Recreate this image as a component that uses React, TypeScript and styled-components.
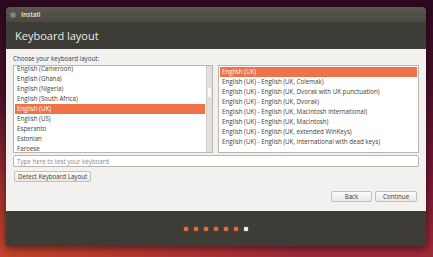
import React from 'react';
import styled, { createGlobalStyle } from 'styled-components';

// Constants
const COLORS = {
  CHROME: '#3d3c37',
  CHROME_TOP: '#59574f',
  PANEL: '#f2f1f0',
  BORDER: '#b9b6b0',
  TEXT: '#3c3c3c',
  ORANGE: '#ef7248',
  DOT: '#e8673c',
};

const FONT = '"Open Sans", "Noto Sans", "DejaVu Sans", sans-serif';
const SMALL = '6.2px';

const GlobalStyle = createGlobalStyle`
  html, body {
    margin: 0;
    width: 433px;
    height: 257px;
    overflow: hidden;
  }
  body {
    font-family: ${FONT};
    background:
      radial-gradient(ellipse 70% 60% at 0% 100%, rgba(200, 70, 40, 0.9), rgba(200, 70, 40, 0) 100%),
      linear-gradient(to bottom, #2c0a1f 0%, #4a1029 35%, #7d1a35 75%, #a02a3a 100%);
  }
`;

const Page = styled.div`
  padding: 7px 7px 0 6px;
`;

const Window = styled.div`
  width: 420px;
  height: 239px;
  display: flex;
  flex-direction: column;
  border-radius: 4px 4px 0 0;
  overflow: hidden;
  box-shadow: 0 2px 8px rgba(0, 0, 0, 0.55);
`;

const TitleBar = styled.div`
  height: 15px;
  display: flex;
  align-items: center;
  gap: 5px;
  padding-left: 4px;
  background: linear-gradient(to bottom, ${COLORS.CHROME_TOP}, #4a4943);
`;

const CloseDot = styled.span`
  width: 6px;
  height: 6px;
  border-radius: 50%;
  background: #8a8883;
  box-shadow: inset 0 0 0 1px #6e6c67;
`;

const WindowTitle = styled.span`
  font-size: ${SMALL};
  font-weight: 700;
  color: #dcd8cf;
`;

const Header = styled.div`
  height: 27px;
  display: flex;
  align-items: center;
  padding-left: 9px;
  background: ${COLORS.CHROME};
  color: #eeebe5;
  font-size: 11px;
`;

const Content = styled.div`
  flex: 1;
  display: flex;
  flex-direction: column;
  background: ${COLORS.PANEL};
  padding: 5px 7px 9px 7px;
`;

const Label = styled.div`
  font-size: ${SMALL};
  line-height: 10px;
  color: ${COLORS.TEXT};
  margin-bottom: 1px;
`;

const Lists = styled.div`
  display: grid;
  grid-template-columns: 200px 201px;
  gap: 5px;
  height: 88px;
`;

const ListBox = styled.div`
  display: flex;
  border: 1px solid ${COLORS.BORDER};
  background: #fff;
  overflow: hidden;
`;

const Rows = styled.div<{ $offset: number }>`
  flex: 1;
  margin-top: ${p => p.$offset}px;
  padding: 0 1px;
`;

const Row = styled.div<{ $selected: boolean }>`
  height: 10px;
  line-height: 10px;
  padding-left: 2px;
  font-size: ${SMALL};
  white-space: nowrap;
  color: ${p => (p.$selected ? '#fff' : COLORS.TEXT)};
  background: ${p => (p.$selected ? COLORS.ORANGE : 'transparent')};
`;

const ScrollTrack = styled.div`
  width: 5px;
  background: #e2e0dc;
  border-left: 1px solid #cfccc6;
  padding-top: 22px;
`;

const ScrollThumb = styled.div`
  height: 9px;
  margin: 0 1px;
  background: #fbfbfa;
  border-radius: 1px;
`;

const TestInput = styled.input`
  margin-top: 2px;
  height: 12px;
  box-sizing: border-box;
  border: 1px solid ${COLORS.BORDER};
  border-radius: 2px;
  padding: 0 3px;
  font-family: ${FONT};
  font-size: ${SMALL};
  background: #fff;
  outline: none;
  &::placeholder {
    color: #8d8b87;
  }
`;

const Button = styled.button<{ $width?: number }>`
  height: 11px;
  box-sizing: border-box;
  padding: 0 3px;
  width: ${p => (p.$width ? `${p.$width}px` : 'auto')};
  border: 1px solid #c2bfb9;
  border-radius: 2px;
  background: linear-gradient(to bottom, #fbfbfa, #eae8e5);
  font-family: ${FONT};
  font-size: ${SMALL};
  line-height: 9px;
  color: ${COLORS.TEXT};
`;

const DetectRow = styled.div`
  margin-top: 4px;
  display: flex;
  padding-left: 1px;
`;

const Actions = styled.div`
  margin-top: auto;
  display: flex;
  justify-content: flex-end;
  gap: 3px;
  padding-right: 2px;
`;

const BottomBar = styled.div`
  height: 35px;
  display: flex;
  align-items: center;
  justify-content: center;
  gap: 6px;
  background: ${COLORS.CHROME};
`;

const Dot = styled.span<{ $current: boolean }>`
  width: 4px;
  height: 4px;
  border-radius: 1px;
  background: ${p => (p.$current ? '#f4f2ee' : COLORS.DOT)};
  box-shadow: 0 0 2px ${p => (p.$current ? 'rgba(255,255,255,0.5)' : 'rgba(232,103,60,0.7)')};
`;

const layouts = [
  'English (Cameroon)',
  'English (Ghana)',
  'English (Nigeria)',
  'English (South Africa)',
  'English (UK)',
  'English (US)',
  'Esperanto',
  'Estonian',
  'Faroese',
];

const variants = [
  'English (UK)',
  'English (UK) - English (UK, Colemak)',
  'English (UK) - English (UK, Dvorak with UK punctuation)',
  'English (UK) - English (UK, Dvorak)',
  'English (UK) - English (UK, Macintosh international)',
  'English (UK) - English (UK, Macintosh)',
  'English (UK) - English (UK, extended WinKeys)',
  'English (UK) - English (UK, international with dead keys)',
];

const App: React.FC = () => {
  return (
    <>
      <GlobalStyle />
      <Page>
        <Window>
          <TitleBar>
            <CloseDot />
            <WindowTitle>Install</WindowTitle>
          </TitleBar>
          <Header>Keyboard layout</Header>
          <Content>
            <Label>Choose your keyboard layout:</Label>
            <Lists>
              <ListBox>
                <Rows $offset={-2}>
                  {layouts.map(name => (
                    <Row key={name} $selected={name === 'English (UK)'}>{name}</Row>
                  ))}
                </Rows>
                <ScrollTrack>
                  <ScrollThumb />
                </ScrollTrack>
              </ListBox>
              <ListBox>
                <Rows $offset={1}>
                  {variants.map((name, i) => (
                    <Row key={name} $selected={i === 0}>{name}</Row>
                  ))}
                </Rows>
              </ListBox>
            </Lists>
            <TestInput placeholder="Type here to test your keyboard" />
            <DetectRow>
              <Button>Detect Keyboard Layout</Button>
            </DetectRow>
            <Actions>
              <Button $width={41}>Back</Button>
              <Button $width={42}>Continue</Button>
            </Actions>
          </Content>
          <BottomBar>
            {[0, 1, 2, 3, 4, 5, 6].map(i => (
              <Dot key={i} $current={i === 6} />
            ))}
          </BottomBar>
        </Window>
      </Page>
    </>
  );
};

export default App;
